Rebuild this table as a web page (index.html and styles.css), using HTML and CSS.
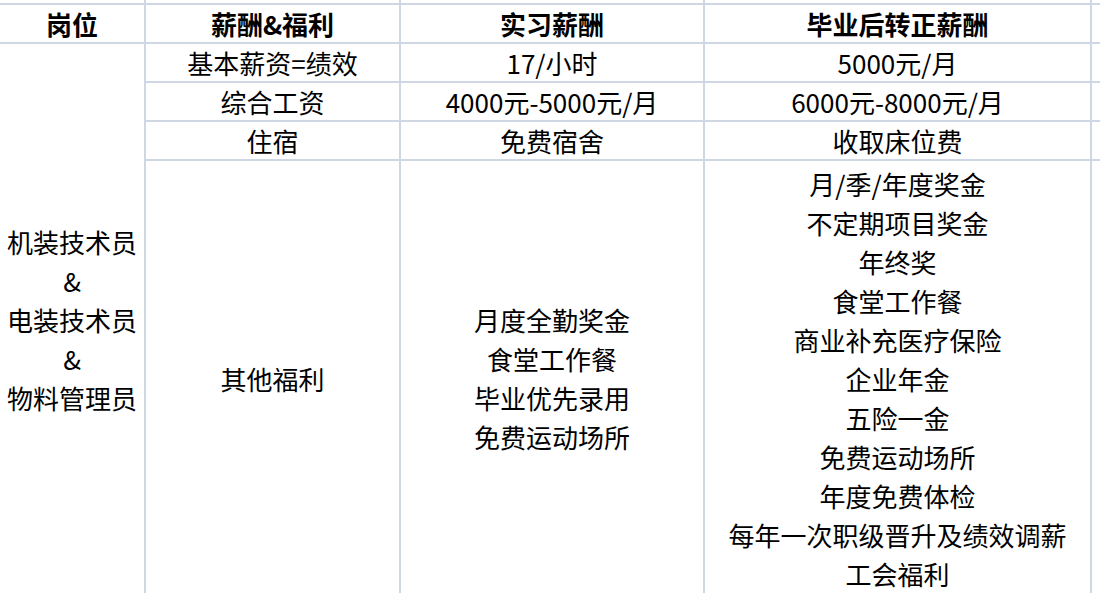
FILE: index.html
```html
<!DOCTYPE html>
<html lang="zh-CN">
<head>
<meta charset="utf-8">
<title>薪酬福利</title>
<link rel="stylesheet" href="styles.css">
</head>
<body>
<table class="sheet">
  <colgroup>
    <col class="c1"><col class="c2"><col class="c3"><col class="c4"><col class="c5">
  </colgroup>
  <tr class="r-top"><td></td><td></td><td></td><td></td><td></td></tr>
  <tr class="r-row">
    <th>岗位</th><th>薪酬&amp;福利</th><th>实习薪酬</th><th>毕业后转正薪酬</th><td></td>
  </tr>
  <tr class="r-row">
    <td rowspan="4" class="pos">机装技术员<br>&amp;<br>电装技术员<br>&amp;<br>物料管理员</td>
    <td>基本薪资=绩效</td><td>17/小时</td><td>5000元/月</td><td></td>
  </tr>
  <tr class="r-row">
    <td>综合工资</td><td>4000元-5000元/月</td><td>6000元-8000元/月</td><td></td>
  </tr>
  <tr class="r-row">
    <td>住宿</td><td>免费宿舍</td><td>收取床位费</td><td></td>
  </tr>
  <tr class="r-big">
    <td>其他福利</td>
    <td>月度全勤奖金<br>食堂工作餐<br>毕业优先录用<br>免费运动场所</td>
    <td>月/季/年度奖金<br>不定期项目奖金<br>年终奖<br>食堂工作餐<br>商业补充医疗保险<br>企业年金<br>五险一金<br>免费运动场所<br>年度免费体检<br>每年一次职级晋升及绩效调薪<br>工会福利</td>
    <td></td>
  </tr>
</table>
</body>
</html>
```
FILE: styles.css
```css
html, body {
  margin: 0;
  padding: 0;
  background: #ffffff;
  overflow: hidden;
}

.sheet {
  border-collapse: collapse;
  table-layout: fixed;
  width: 1131px;
  font-family: "Noto Sans CJK SC", "Noto Sans", sans-serif;
  font-size: 26px;
  color: #000;
}

.c1 { width: 145px; }
.c2 { width: 255px; }
.c3 { width: 304px; }
.c4 { width: 387px; }
.c5 { width: 40px; }

.sheet td,
.sheet th {
  border: 2px solid #cfd6e4;
  padding: 0;
  text-align: center;
  vertical-align: middle;
  line-height: 37px;
  white-space: nowrap;
  overflow: hidden;
}

.sheet tr > :first-child {
  border-left: none;
}

.sheet .r-top td {
  border-top: none;
}

.sheet th {
  font-weight: 700;
}

.r-top { height: 4px; }
.r-top td { line-height: 0; font-size: 0; }
.r-row { height: 39px; }
.r-big { height: 436px; }
.r-big td,
.sheet .pos { line-height: 39px; }

.sheet .pos {
  border-left: none;
}
```
